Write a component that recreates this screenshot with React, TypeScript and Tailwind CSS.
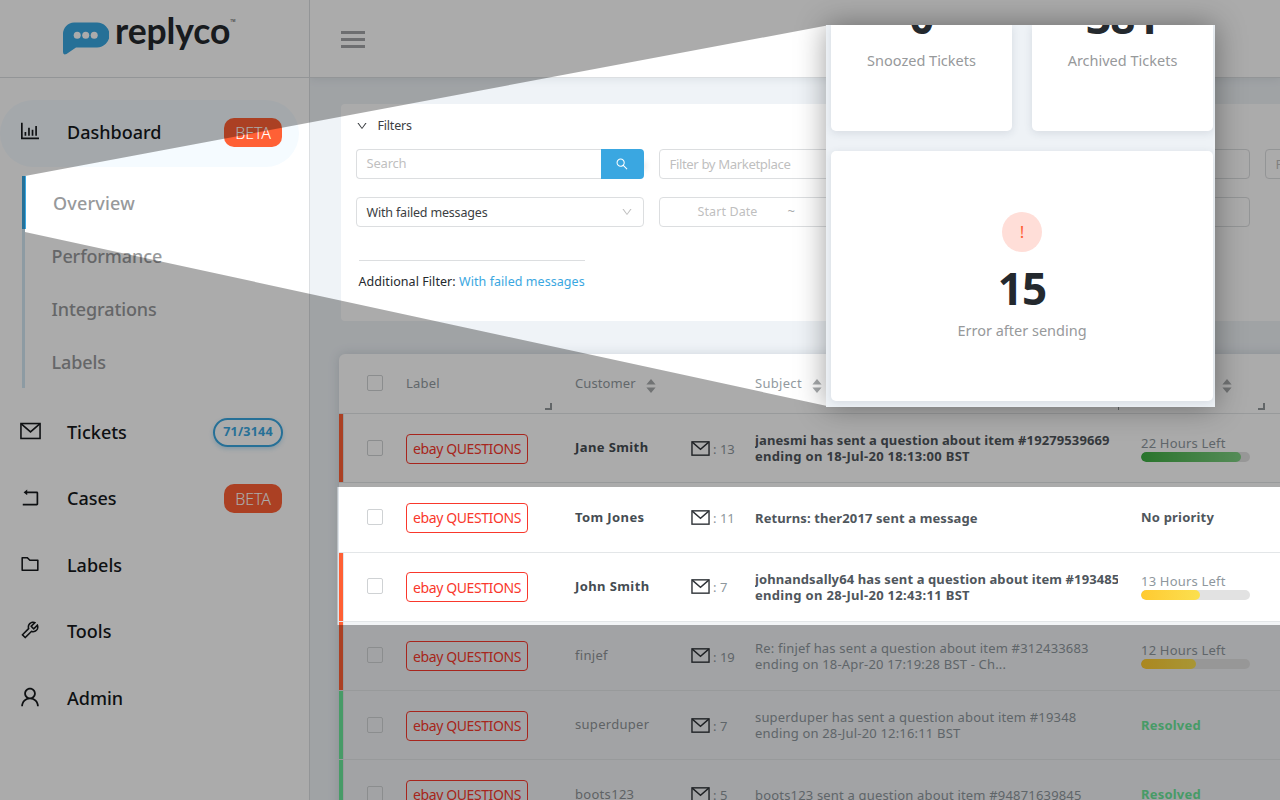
import React from 'react';
import {
  AiOutlineBarChart,
  AiOutlineDown,
  AiOutlineFolder,
  AiOutlineRollback,
  AiOutlineSearch,
  AiOutlineTool,
  AiOutlineUser,
} from 'react-icons/ai';
import clsx from 'clsx';

type Ticket = {
  customer: string;
  count: number;
  subject: string[];
  unread: boolean;
  edge: 'red' | 'green' | 'none';
  hours?: number;
  progress?: number;
  color?: 'green' | 'yellow';
  status?: string;
};

const TICKETS: Ticket[] = [
  {
    customer: 'Jane Smith',
    count: 13,
    subject: ['janesmi has sent a question about item #19279539669', 'ending on 18-Jul-20 18:13:00 BST'],
    unread: true,
    edge: 'red',
    hours: 22,
    progress: 92,
    color: 'green',
  },
  {
    customer: 'Tom Jones',
    count: 11,
    subject: ['Returns: ther2017 sent a message'],
    unread: true,
    edge: 'none',
    status: 'No priority',
  },
  {
    customer: 'John Smith',
    count: 7,
    subject: ['johnandsally64 has sent a question about item #193485', 'ending on 28-Jul-20 12:43:11 BST'],
    unread: true,
    edge: 'red',
    hours: 13,
    progress: 54,
    color: 'yellow',
  },
  {
    customer: 'finjef',
    count: 19,
    subject: ['Re: finjef has sent a question about item #312433683', 'ending on 18-Apr-20 17:19:28 BST - Ch...'],
    unread: false,
    edge: 'red',
    hours: 12,
    progress: 50,
    color: 'yellow',
  },
  {
    customer: 'superduper',
    count: 7,
    subject: ['superduper has sent a question about item #19348', 'ending on 28-Jul-20 12:16:11 BST'],
    unread: false,
    edge: 'green',
    status: 'Resolved',
  },
  {
    customer: 'boots123',
    count: 5,
    subject: ['boots123 sent a question about item #94871639845'],
    unread: false,
    edge: 'green',
    status: 'Resolved',
  },
];

function MailIcon({ className }: { className?: string }) {
  return (
    <svg viewBox="0 0 20 16" fill="none" stroke="currentColor" strokeWidth="1.5" className={className}>
      <rect x="0.9" y="0.9" width="18.2" height="14.2" />
      <path d="M1.2 1.2 L10 8.8 L18.8 1.2" />
    </svg>
  );
}

function Logo() {
  return (
    <div className="box-content flex h-[77px] items-start border-b border-[#dcdfe2] pl-[62px]">
      <svg viewBox="0 0 47 34" className="mt-[22px] h-[34px] w-[47px] shrink-0">
        <path
          d="M12 0.5 H35 A12.2 12.2 0 0 1 35 25.5 H14 L4.5 32 Q1 33.5 1 30 V12 A11.5 11.5 0 0 1 12 0.5 Z"
          fill="#3aa7e1"
        />
        <circle cx="15.2" cy="13.3" r="3.5" fill="#fff" />
        <circle cx="23.7" cy="13.3" r="3.5" fill="#fff" />
        <circle cx="32.2" cy="13.3" r="3.5" fill="#fff" />
      </svg>
      <span className="ml-[6px] mt-[9px] font-[Lato,sans-serif] text-[35.5px] font-bold leading-[44px] tracking-[-0.1px] text-[#24292e]">
        replyco
      </span>
      <span className="mt-[18px] text-[3.5px] leading-[5px] text-[#24292e]">TM</span>
    </div>
  );
}

function BetaBadge() {
  return (
    <span className="ml-auto mr-[27px] flex h-[29px] w-[58px] items-center justify-center rounded-[10px] bg-[#ff6035] text-[16px] font-light tracking-[-0.1px] text-white">
      BETA
    </span>
  );
}

function NavItem({
  icon,
  label,
  active,
  children,
}: {
  icon: React.ReactNode;
  label: string;
  active?: boolean;
  children?: React.ReactNode;
}) {
  return (
    <div
      className={clsx(
        'flex h-[66.5px] shrink-0 items-center pl-5 text-[18px] font-medium text-[#16191c]',
        active && 'mr-[10px] rounded-full bg-[#f5fbff] pb-px',
      )}
    >
      <span className="flex w-[47px] items-center pb-[3px]">{icon}</span>
      <span>{label}</span>
      {children}
    </div>
  );
}

function Sidebar() {
  const subItems = ['Overview', 'Performance', 'Integrations', 'Labels'];
  return (
    <aside className="flex h-[800px] w-[310px] shrink-0 flex-col border-r border-[#dcdfe2] bg-white">
      <Logo />
      <nav className="flex flex-col pt-[22px]">
        <NavItem icon={<AiOutlineBarChart className="-ml-[2px] h-6 w-6" />} label="Dashboard" active>
          <span className="-mr-[10px] ml-auto flex">
            <BetaBadge />
          </span>
        </NavItem>
        <div className="mb-[11.5px] ml-[22px] mt-[9px] flex flex-col">
          {subItems.map((item, i) => (
            <div
              key={item}
              className={clsx(
                'flex h-[53px] items-center pt-[2px] text-[18px] font-medium text-[#97999b]',
                i === 0
                  ? 'border-l-4 border-[#3aa7e1] pl-[27px] tracking-[0.2px]'
                  : 'border-l-[3px] border-[#d3e7f3] pl-[26.5px] tracking-[-0.1px]',
              )}
            >
              {item}
            </div>
          ))}
        </div>
        <NavItem icon={<MailIcon className="h-[18px] w-[21px]" />} label="Tickets">
          <span className="ml-auto mr-[26px] flex h-[29px] w-[70px] items-center justify-center rounded-full border-2 border-[#3aa7e1] text-[12.5px] font-bold tracking-[0.2px] text-[#3aa7e1] shadow-[0_2px_4px_rgba(58,167,225,0.3)]">
            71/3144
          </span>
        </NavItem>
        <NavItem icon={<AiOutlineRollback className="-ml-[1px] h-[23px] w-[23px]" />} label="Cases">
          <BetaBadge />
        </NavItem>
        <NavItem icon={<AiOutlineFolder className="-ml-[1px] h-[22px] w-[22px]" />} label="Labels" />
        <NavItem icon={<AiOutlineTool className="-ml-[1px] h-[22px] w-[22px]" />} label="Tools" />
        <NavItem icon={<AiOutlineUser className="-ml-[2px] h-6 w-6" />} label="Admin" />
      </nav>
    </aside>
  );
}

function Field({ children }: { children?: React.ReactNode }) {
  return (
    <div className="flex h-[30px] items-center overflow-hidden whitespace-nowrap rounded border border-[#dcdee0] bg-white px-[10px] text-[13px] text-[#bfbfbf]">
      {children}
    </div>
  );
}

function Filters() {
  return (
    <section className="ml-[31px] mt-[26px] h-[217px] w-[1250px] shrink-0 rounded bg-white pl-[14.5px] pt-[12px]">
      <div className="flex h-5 items-center gap-[10px] text-[12.5px] tracking-[-0.2px] text-[#3b3e42]">
        <AiOutlineDown className="h-3 w-3" />
        <span>Filters</span>
      </div>
      <div className="mt-[13px] grid grid-cols-[repeat(4,288px)] gap-x-[15px] gap-y-[18px]">
        <div className="flex h-[30px] shadow-[14px_2px_6px_-12px_rgba(0,0,0,0.12)]">
          <div className="flex flex-1 items-center rounded-l border border-r-0 border-[#dcdee0] pl-[10px] text-[13px] tracking-[-0.2px] text-[#bfbfbf]">
            Search
          </div>
          <div className="flex w-[43px] items-center justify-center rounded-r bg-[#3aa7e1] text-white">
            <AiOutlineSearch className="h-[14px] w-[14px]" />
          </div>
        </div>
        <Field>
          <span className="pt-px tracking-[-0.4px] [font-size:13.2px]">Filter by Marketplace</span>
        </Field>
        <Field />
        <Field>
          <span className="pt-px">Filter by Channel</span>
        </Field>
        <Field>
          <span className="pt-[2px] text-[12.5px] tracking-[-0.18px] text-[#3b3e42]">With failed messages</span>
          <AiOutlineDown className="ml-auto h-3 w-3" />
        </Field>
        <Field>
          <span className="ml-[28px] text-[12.5px] tracking-[0.1px]">Start Date</span>
          <span className="ml-[30px] text-[#a5a8aa]">~</span>
        </Field>
        <Field />
      </div>
      <div className="ml-[3px] mt-[33px] w-[226px] whitespace-nowrap border-t border-[#dcdee0] pt-[12px] text-[12.5px] leading-[18px] tracking-[0.06px] text-[#24292e]">
        Additional Filter: <span className="text-[#3aa7e1]">With failed messages</span>
      </div>
    </section>
  );
}

function Sorter() {
  return (
    <svg viewBox="0 0 10 14" className="mt-[5px] h-[14px] w-[10px] text-[#a9acae]" fill="currentColor">
      <path d="M5 0 L9.6 5.4 H0.4 Z M5 14 L0.4 8.4 H9.6 Z" />
    </svg>
  );
}

function ResizeHandle({ thin }: { thin?: boolean }) {
  return (
    <span
      className={clsx(
        'mb-[3px] ml-auto h-[7px] self-end border-[#93989b]',
        thin ? 'w-px border-r' : 'w-[7px] border-b-2 border-r-2',
      )}
    />
  );
}

function Checkbox() {
  return <span className="block h-4 w-4 rounded-[2px] border border-[#cfd2d4] bg-transparent" />;
}

function TableHeader() {
  return (
    <div className="grid h-[60px] grid-cols-[67px_169px_116px_64px_386px_200px] border-b border-[#e3e6e8] text-[13px] text-[#929a9f]">
      <div className="flex items-center pb-[2px] pl-[28px]">
        <Checkbox />
      </div>
      <div className="flex items-center tracking-[0.2px]">
        <span className="pt-px">Label</span>
        <span className="mr-[23px] flex flex-1 self-stretch">
          <ResizeHandle />
        </span>
      </div>
      <div className="flex items-center gap-[10px] tracking-[0.1px]">
        <span className="pt-px">Customer</span>
        <Sorter />
      </div>
      <div />
      <div className="flex items-center gap-[10px] tracking-[0.3px]">
        <span className="pt-px">Subject</span>
        <Sorter />
        <span className="mr-[22px] flex flex-1 self-stretch">
          <ResizeHandle thin />
        </span>
      </div>
      <div className="flex items-center pl-[81px]">
        <Sorter />
        <span className="mr-[76px] flex flex-1 self-stretch">
          <ResizeHandle />
        </span>
      </div>
    </div>
  );
}

function TicketRow({ ticket }: { ticket: Ticket }) {
  return (
    <div
      className={clsx(
        'grid h-[69.25px] grid-cols-[5px_62px_169px_116px_64px_386px_200px] items-center border-b border-[#e3e6e8] text-[13px]',
        ticket.unread ? 'bg-white' : 'bg-[#f2f4f6]',
      )}
    >
      <div
        className={clsx(
          'h-full border-r border-[#e3e6e8]',
          ticket.edge === 'red' && 'bg-[#ff6035]',
          ticket.edge === 'green' && 'bg-[#6be79a]',
          ticket.edge === 'none' && 'border-transparent',
        )}
      />
      <div className="pb-px pl-[23px]">
        <Checkbox />
      </div>
      <div className="pt-px">
        <span className="flex h-[30px] w-[122px] items-center justify-center rounded border-[1.5px] border-[#f9382c] text-[14px] tracking-[-0.4px] text-[#f9382c]">
          ebay QUESTIONS
        </span>
      </div>
      <div className={clsx(ticket.unread ? 'font-bold tracking-[0.4px] text-[#454c52]' : 'tracking-[0.3px] text-[#8e9397]')}>
        {ticket.customer}
      </div>
      <div className="flex items-center text-[#8e979d]">
        <MailIcon className="h-[15px] w-[19px] text-[#2f3338]" />
        <span className="ml-[3px] pt-[3px]">: {ticket.count}</span>
      </div>
      <div
        className={clsx(
          'mr-[23px] overflow-hidden whitespace-nowrap leading-4',
          ticket.unread ? 'font-bold text-[#4f565c]' : 'text-[#8e979d]',
          ticket.subject.length === 1 && 'pt-[2px]',
        )}
      >
        {ticket.subject.map((line, i) => (
          <div
            key={line}
            className={clsx(
              ticket.unread && (i === 0 ? 'tracking-[0.11px]' : 'tracking-[0.31px]'),
              !ticket.unread && 'tracking-[0.18px]',
            )}
          >
            {line}
          </div>
        ))}
      </div>
      {ticket.status ? (
        <div
          className={clsx(
            'pt-px font-bold tracking-[0.2px]',
            ticket.status === 'Resolved' ? 'text-[#6be79a]' : 'text-[#4f565c]',
          )}
        >
          {ticket.status}
        </div>
      ) : (
        <div className="leading-4 tracking-[0.2px] text-[#8e979d]">
          <div>{ticket.hours} Hours Left</div>
          <div className="mt-[1px] h-[10px] w-[109px] overflow-hidden rounded-full bg-[#e2e2e2]">
            <div
              className={clsx(
                'h-full rounded-full bg-gradient-to-r',
                ticket.color === 'green' ? 'from-[#3cae41] to-[#7fd083]' : 'from-[#ffca30] to-[#fbe04f]',
              )}
              style={{ width: `${ticket.progress}%` }}
            />
          </div>
        </div>
      )}
    </div>
  );
}

function StatCard({ value, label }: { value: string; label: string }) {
  return (
    <div className="flex flex-1 flex-col items-center justify-end rounded-b-[5px] bg-white pb-[59px] shadow-[0_2px_8px_rgba(40,60,80,0.12)]">
      <span className="text-[44px] font-bold leading-[50px] tracking-[-0.8px] text-[#24292e]">{value}</span>
      <span className="mt-[6px] text-[14.5px] leading-6 text-[#97999b]">{label}</span>
    </div>
  );
}

function StatsCallout() {
  return (
    <div className="absolute left-[826px] top-[25px] flex h-[382px] w-[389px] flex-col overflow-hidden bg-[#eef2f6] pl-[5px] pr-[2px]">
      <div className="flex h-[106px] gap-5">
        <StatCard value="0" label="Snoozed Tickets" />
        <StatCard value="381" label="Archived Tickets" />
      </div>
      <div className="mt-5 flex h-[250px] flex-col items-center rounded-[5px] bg-white pt-[61px] shadow-[0_2px_8px_rgba(40,60,80,0.12)]">
        <span className="flex h-10 w-10 items-center justify-center rounded-full bg-[#ffded8] text-[17px] text-[#ff6035]">!</span>
        <span className="mt-[11px] text-[44px] font-bold leading-[50px] tracking-[-0.8px] text-[#24292e]">15</span>
        <span className="mt-[5px] text-[14.5px] leading-6 text-[#97999b]">Error after sending</span>
      </div>
    </div>
  );
}

// Dims the page, leaving the beam and the two highlighted rows clear
function Spotlight() {
  return (
    <svg viewBox="0 0 1280 800" className="absolute inset-0 h-[800px] w-[1280px]">
      <path
        d="M0 0 H1280 V800 H0 Z M25 176 L827 25.5 V406 L25 232 Z M337.5 487 V625 H1280 V487 Z"
        fillRule="evenodd"
        fill="#000"
        fillOpacity="0.33"
      />
    </svg>
  );
}

function App() {
  return (
    <div className="relative flex h-[800px] w-[1280px] overflow-hidden bg-[#eff3f7] font-['Noto_Sans',sans-serif]">
      <Sidebar />
      <main className="flex min-w-0 flex-1 flex-col overflow-hidden">
        <header className="flex h-[78px] shrink-0 flex-col gap-1 border-b border-[#dcdfe2] bg-white pl-[31px] pt-[31px] shadow-[0_2px_8px_rgba(40,60,80,0.08)]">
          <span className="h-[3px] w-6 bg-[#a3a5a7]" />
          <span className="h-[3px] w-6 bg-[#a3a5a7]" />
          <span className="h-[3px] w-6 bg-[#a3a5a7]" />
        </header>
        <Filters />
        <section className="ml-[29px] mt-[33px] w-[1002px] shrink-0 rounded-t-[6px] bg-white shadow-[0_0_12px_rgba(40,60,80,0.16)]">
          <TableHeader />
          {TICKETS.map(ticket => (
            <TicketRow key={ticket.customer} ticket={ticket} />
          ))}
        </section>
      </main>
      <Spotlight />
      <div className="absolute left-[826px] top-[25px] h-[382px] w-[389px] shadow-[0_0_28px_rgba(0,0,0,0.38)]" />
      <StatsCallout />
    </div>
  );
}

export default App;
